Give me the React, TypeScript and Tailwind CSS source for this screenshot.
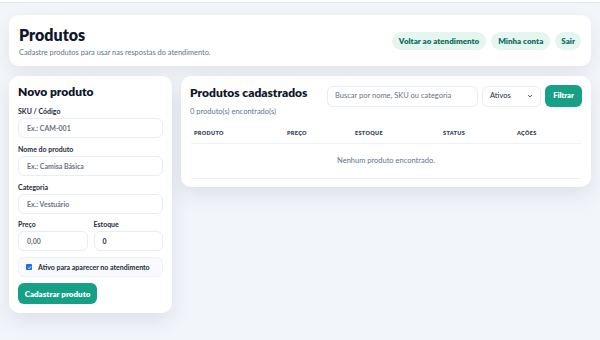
import React from "react";

const font = { fontFamily: "Lato, 'Noto Sans', sans-serif" };

function Field({ label, placeholder, value, className = "" }: { label: string; placeholder?: string; value?: string; className?: string }) {
  return (
    <div className={"flex flex-col " + className}>
      <div className="text-[7px] font-bold text-[#1e293b] leading-none h-[7px]">{label}</div>
      <div className="mt-[3px] h-[20px] rounded-[6px] border border-[#e8edf3] bg-white flex items-center px-[8px] text-[7px] font-bold">
        {value ? <span className="text-[#1e293b]">{value}</span> : <span className="text-[#6b7280]">{placeholder}</span>}
      </div>
    </div>
  );
}

export default function App() {
  return (
    <div className="w-[600px] h-[340px] bg-[#f2f5fa] overflow-hidden" style={font}>
      <div className="h-[2px] bg-white" />
      <div className="h-[1px] bg-[#e2e5ea]" />
      <div className="px-[9px] pt-[12px]">
        <div className="h-[51px] bg-white rounded-[10px] shadow-[0_6px_18px_rgba(15,23,42,0.07)] flex items-center justify-between pl-[10px] pr-[10px]">
          <div className="flex flex-col mt-[2px]">
            <div className="text-[16px] font-extrabold text-[#0f172a] leading-none">Produtos</div>
            <div className="text-[7.4px] text-[#64748b] mt-[6px] leading-none">Cadastre produtos para usar nas respostas do atendimento.</div>
          </div>
          <div className="flex gap-[5px] items-center">
            <div className="h-[18px] px-[7px] rounded-full bg-[#e5f5f0] text-[#11705c] text-[8px] font-extrabold flex items-center">Voltar ao atendimento</div>
            <div className="h-[18px] px-[7px] rounded-full bg-[#e5f5f0] text-[#11705c] text-[8px] font-extrabold flex items-center">Minha conta</div>
            <div className="h-[18px] px-[6px] rounded-full bg-[#e5f5f0] text-[#11705c] text-[8px] font-extrabold flex items-center">Sair</div>
          </div>
        </div>

        <div className="flex gap-[9px] mt-[10px] items-start">
          <div className="w-[163px] bg-white rounded-[10px] shadow-[0_8px_22px_rgba(15,23,42,0.09)] px-[9px] pt-[10px] pb-[9px] flex flex-col">
            <div className="text-[12px] font-extrabold text-[#0f172a] leading-none">Novo produto</div>
            <Field className="mt-[10px]" label="SKU / Código" placeholder="Ex.: CAM-001" />
            <Field className="mt-[8px]" label="Nome do produto" placeholder="Ex.: Camisa Básica" />
            <Field className="mt-[8px]" label="Categoria" placeholder="Ex.: Vestuário" />
            <div className="flex gap-[6px] mt-[7px]">
              <Field className="flex-1" label="Preço" placeholder="0,00" />
              <Field className="flex-1" label="Estoque" value="0" />
            </div>
            <div className="mt-[6px] h-[20px] rounded-[6px] border border-[#eef1f5] bg-[#f8fafc] flex items-center px-[7px] gap-[6px]">
              <div className="w-[6px] h-[6px] rounded-[1px] bg-[#1d6fe0] flex items-center justify-center">
                <svg width="5" height="5" viewBox="0 0 10 10"><path d="M2 5.2 L4.2 7.4 L8 2.8" stroke="white" strokeWidth="1.8" fill="none" /></svg>
              </div>
              <span className="text-[7px] font-bold text-[#1e293b]">Ativo para aparecer no atendimento</span>
            </div>
            <div className="mt-[6px] h-[21px] w-[79px] rounded-[6px] bg-[#16a085] text-white text-[8px] font-extrabold flex items-center justify-center">Cadastrar produto</div>
          </div>

          <div className="flex-1 bg-white rounded-[10px] shadow-[0_8px_22px_rgba(15,23,42,0.09)] px-[9px] pt-[9px] pb-[8px]">
            <div className="flex items-start justify-between">
              <div className="flex flex-col">
                <div className="text-[12px] font-extrabold text-[#0f172a] leading-none mt-[2px]">Produtos cadastrados</div>
                <div className="text-[7.5px] text-[#64748b] leading-none mt-[9px]">0 produto(s) encontrado(s)</div>
              </div>
              <div className="flex items-center gap-[4px]">
                <div className="w-[151px] h-[21px] rounded-[6px] border border-[#e8edf3] flex items-center px-[7px] text-[7.5px] text-[#6b7280]">Buscar por nome, SKU ou categoria</div>
                <div className="w-[59px] h-[21px] rounded-[6px] border border-[#e8edf3] flex items-center justify-between px-[7px] text-[7.5px] text-[#1e293b]">
                  <span>Ativos</span>
                  <svg width="6" height="6" viewBox="0 0 10 10"><path d="M2 3.5 L5 6.5 L8 3.5" stroke="#334155" strokeWidth="1.6" fill="none" /></svg>
                </div>
                <div className="w-[37px] h-[22px] rounded-[6px] bg-[#16a085] text-white text-[7.5px] font-extrabold flex items-center justify-center">Filtrar</div>
              </div>
            </div>
            <div className="mt-[8px] mx-[1px]">
              <div className="grid grid-cols-[93px_68px_88px_74px_1fr] h-[20px] items-center border-b border-[#eef1f5] px-[3px] text-[5.5px] font-extrabold tracking-[0.06em] text-[#334155]">
                <div>PRODUTO</div>
                <div>PREÇO</div>
                <div>ESTOQUE</div>
                <div>STATUS</div>
                <div>AÇÕES</div>
              </div>
              <div className="h-[35px] border-b border-[#eef1f5] flex items-center justify-center text-[7.5px] text-[#64748b]">Nenhum produto encontrado.</div>
            </div>
          </div>
        </div>
      </div>
    </div>
  );
}
